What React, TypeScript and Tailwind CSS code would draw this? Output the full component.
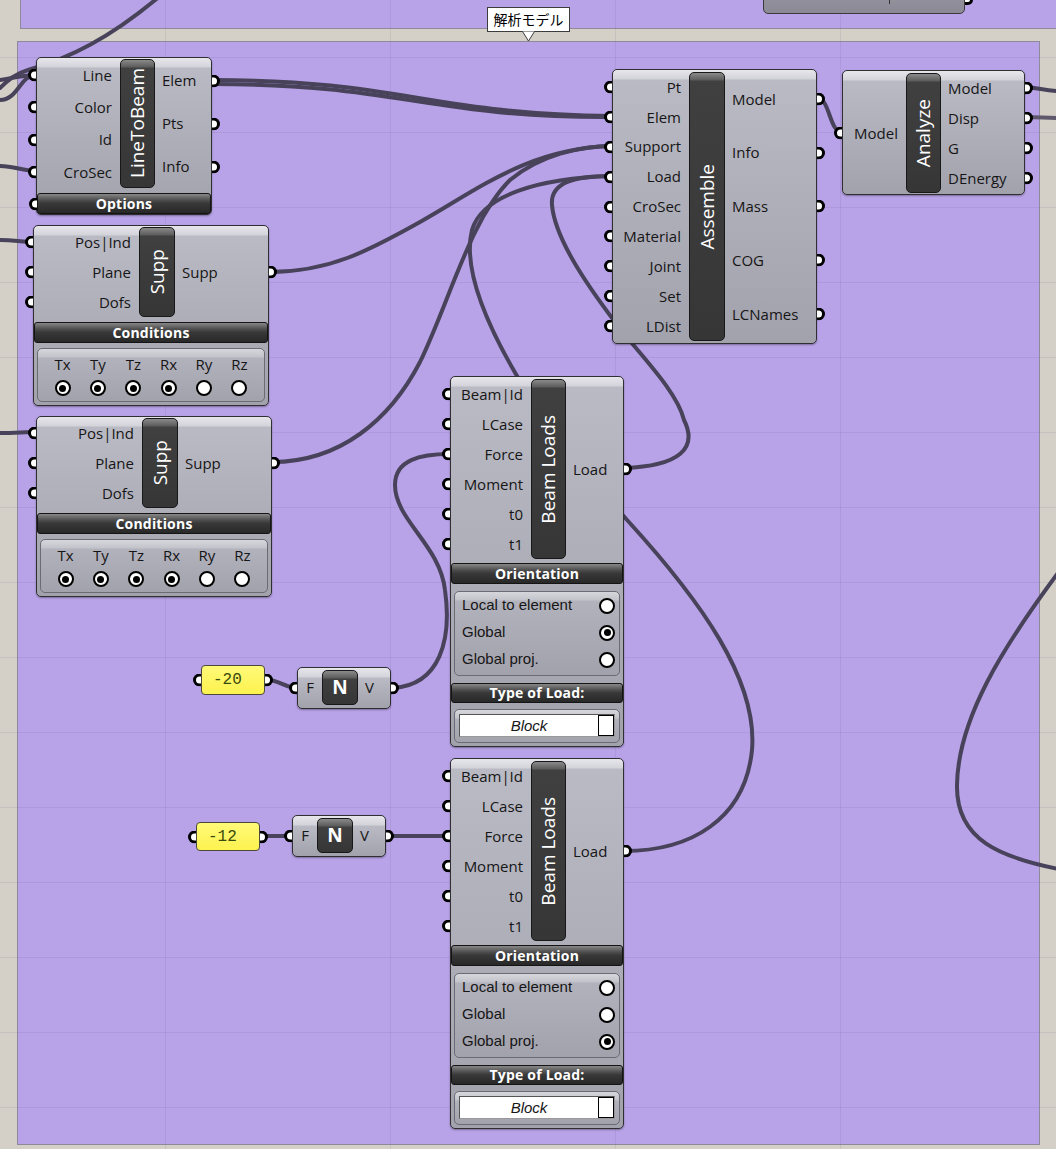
import React from "react";

const bodyCls =
  "absolute rounded-[5px] border border-[#2f2f33] bg-[linear-gradient(to_bottom,#e6e6eb_0px,#d3d3da_9px,#babac4_10px,#a2a2ad_100%)] shadow-[0_1px_2px_rgba(0,0,0,0.35)]";

const panelCls =
  "rounded-[5px] border border-[#6b6b74] bg-[linear-gradient(to_bottom,#d6d6dc_0px,#c3c3cb_8px,#b2b2bc_9px,#a2a2ac_100%)]";

function InPort() {
  return (
    <span className="absolute left-[-9px] top-1/2 h-[13px] w-[8px] -translate-y-1/2 rounded-l-full border-[3px] border-r-0 border-black bg-white" />
  );
}

function OutPort() {
  return (
    <span className="absolute right-[-9px] top-1/2 h-[13px] w-[8px] -translate-y-1/2 rounded-r-full border-[3px] border-l-0 border-black bg-white" />
  );
}

function Strip({ label, cls, upright }: { label: string; cls: string; upright?: boolean }) {
  return (
    <div
      className={
        "flex items-center justify-center rounded-[5px] border border-[#181818] bg-[linear-gradient(to_bottom,#8a8a8a_0px,#5c5c5c_7px,#404040_8px,#363636_100%)] " +
        cls
      }
    >
      {upright ? (
        <span className="text-[19px] font-bold leading-none text-white">{label}</span>
      ) : (
        <span className="rotate-180 text-[19px] leading-none text-white [writing-mode:vertical-rl]">
          {label}
        </span>
      )}
    </div>
  );
}

function Bar({ label, cls = "", port }: { label: string; cls?: string; port?: boolean }) {
  return (
    <div
      className={
        "relative rounded-[3px] border border-[#141414] bg-[linear-gradient(to_bottom,#888888_0px,#4e4e4e_6px,#383838_50%,#282828_100%)] text-center text-[14px] font-bold tracking-[0.2px] text-white " +
        cls
      }
    >
      {label}
      {port && <InPort />}
    </div>
  );
}

type CompProps = {
  pos: string;
  pad: string;
  inCol: string;
  strip: string;
  rowH: string;
  title: string;
  inputs: string[];
  outputs: string[];
  upright?: boolean;
  children?: React.ReactNode;
};

function Comp(p: CompProps) {
  return (
    <div className={bodyCls + " " + p.pos + " " + p.pad}>
      <div className={"flex " + p.rowH}>
        <div className={"flex flex-col " + p.inCol}>
          {p.inputs.map((l) => (
            <div key={l} className="relative flex flex-1 items-center justify-end pr-[8px]">
              {l}
              <InPort />
            </div>
          ))}
        </div>
        <Strip label={p.title} cls={p.strip} upright={p.upright} />
        <div className="flex flex-1 flex-col">
          {p.outputs.map((l) => (
            <div key={l} className="relative flex flex-1 items-center pl-[7px]">
              {l}
              <OutPort />
            </div>
          ))}
        </div>
      </div>
      {p.children}
    </div>
  );
}

function Dot({ on, size }: { on: boolean; size: string }) {
  return (
    <span className={"flex items-center justify-center rounded-full border-[2.5px] border-black bg-white " + size}>
      {on && <span className="h-[7px] w-[7px] rounded-full bg-black" />}
    </span>
  );
}

function Supp({ pos }: { pos: string }) {
  const dofs: [string, boolean][] = [
    ["Tx", true],
    ["Ty", true],
    ["Tz", true],
    ["Rx", true],
    ["Ry", false],
    ["Rz", false],
  ];
  return (
    <Comp
      pos={pos + " w-[236px]"}
      pad="pt-[1px] pb-[3px]"
      inCol="w-[105px]"
      strip="w-[36px]"
      rowH="h-[90px]"
      title="Supp"
      inputs={["Pos|Ind", "Plane", "Dofs"]}
      outputs={["Supp"]}
    >
      <Bar label="Conditions" cls="mt-[5px] h-[21px] leading-[19px]" />
      <div className={panelCls + " mx-[3px] mt-[5px] grid h-[54px] grid-cols-6 px-[7px]"}>
        {dofs.map(([l, on]) => (
          <div key={l} className="flex flex-col items-center">
            <span className="mt-[5px] text-[15px] leading-[20px]">{l}</span>
            <span className="mt-[6px]">
              <Dot on={on} size="h-[16px] w-[16px]" />
            </span>
          </div>
        ))}
      </div>
    </Comp>
  );
}

function BeamLoads({ pos, sel }: { pos: string; sel: number }) {
  const opts = ["Local to element", "Global", "Global proj."];
  return (
    <Comp
      pos={pos + " w-[174px]"}
      pad="pt-[2px] pb-[3px]"
      inCol="w-[80px]"
      strip="w-[35px]"
      rowH="h-[180px]"
      title="Beam Loads"
      inputs={["Beam|Id", "LCase", "Force", "Moment", "t0", "t1"]}
      outputs={["Load"]}
    >
      <Bar label="Orientation" cls="mt-[4px] h-[21px] leading-[19px]" />
      <div className={panelCls + " mx-[3px] mt-[7px] h-[85px]"}>
        {opts.map((o, i) => (
          <div
            key={o}
            className="flex h-[27px] items-center justify-between pl-[7px] pr-[4px] font-['Liberation_Sans',sans-serif] text-[15px]"
          >
            <span>{o}</span>
            <Dot on={i === sel} size="h-[16px] w-[16px]" />
          </div>
        ))}
      </div>
      <Bar label="Type of Load:" cls="mt-[7px] h-[20px] leading-[18px]" />
      <div className={panelCls + " mx-[3px] mt-[6px] h-[34px] px-[4px] pt-[4px]"}>
        <div className="flex h-[23px] border border-t-[#555] border-l-[#555] border-r-[#999] border-b-[#999] bg-white">
          <div className="flex-1 text-center font-['Liberation_Sans',sans-serif] text-[15px] italic leading-[21px]">
            Block
          </div>
          <div className="w-[16px] border border-black bg-white" />
        </div>
      </div>
    </Comp>
  );
}

function Slider({ pos, value }: { pos: string; value: string }) {
  return (
    <div
      className={
        "absolute w-[64px] rounded-[4px] border border-[#4a4a3a] bg-[linear-gradient(to_bottom,#fffa78,#fdf24f)] pl-[11px] font-['Liberation_Mono',monospace] text-[16px] text-[#3a4a0c] " +
        pos
      }
    >
      <span className="flex h-full items-center">{value}</span>
      <InPort />
      <OutPort />
    </div>
  );
}

const wires = [
  "M160,-4 C110,38 70,58 28,70 C15,74 8,80 0,88",
  "M0,100 C18,100 20,75 36,75",
  "M0,80 C15,78 22,75 36,75",
  "M0,166 C15,166 22,171 36,171",
  "M0,240 C15,240 20,242 33,242",
  "M0,433 C15,433 25,432 36,432",
  "M212,80 C400,80 430,114 612,116",
  "M212,84 C400,84 430,118 612,117",
  "M269,272 C330,272 370,250 420,222 C480,188 530,148 612,146",
  "M272,462 C340,462 390,420 420,362 C450,300 470,220 510,180 C540,155 580,146 612,146",
  "M624,468 C680,466 698,448 684,420 C678,395 650,365 625,335 C590,290 555,240 552,205 C550,182 575,176 612,176",
  "M624,851 C690,851 745,820 752,750 C758,680 700,600 628,521 C580,468 530,400 517,376 C490,330 462,270 472,230 C482,195 540,178 612,176",
  "M393,688 C440,685 452,640 445,590 C440,545 395,520 395,485 C395,460 420,454 450,454",
  "M267,680 C280,680 285,688 297,688",
  "M262,836 L292,836",
  "M388,836 L450,836",
  "M817,98 C830,98 829,132 842,132",
  "M1025,87 C1040,88 1045,91 1060,91",
  "M1064,565 C1000,650 958,720 957,785 C956,840 1000,858 1064,870",
];

export default function App() {
  return (
    <div className="relative h-[1149px] w-[1056px] overflow-hidden bg-[#d4d0c8] font-['Open_Sans',sans-serif] text-[15px] text-[#161616]">
      {/* groups */}
      <div className="absolute left-[20px] top-[-10px] h-[39px] w-[1060px] border border-[#8f8a9a] bg-[#b9a3e8]" />
      <div className="absolute left-[17px] top-[41px] h-[1104px] w-[1023px] border border-[#8f8a9a] bg-[#b9a3e8]" />

      {/* grid */}
      <div className="absolute inset-0 bg-[linear-gradient(to_right,rgba(60,50,90,0.09)_1px,transparent_1px),linear-gradient(to_bottom,rgba(60,50,90,0.09)_1px,transparent_1px)] bg-[size:225px_75px] bg-[position:165px_57px]" />

      {/* wires */}
      <svg className="absolute inset-0" width="1056" height="1149">
        {wires.map((d, i) => (
          <path key={i} d={d} fill="none" stroke="#48425a" strokeWidth="4" strokeLinecap="round" />
        ))}
        <path d="M1025,117 C1040,117 1045,118 1060,118" fill="none" stroke="#5f586c" strokeWidth="4" />
      </svg>

      {/* top group component (cut off) */}
      <div className="absolute left-[763px] top-[-20px] h-[34px] w-[202px] rounded-[5px] border border-[#3a3a3a] bg-[linear-gradient(to_bottom,#9a99a4,#8a8995)]">
        <span className="absolute bottom-[9px] left-[125px] h-[6px] w-px bg-[#333]" />
        <span className="absolute right-[-9px] top-[14px] h-[10px] w-[8px] rounded-r-full border-[3px] border-l-0 border-black bg-white" />
      </div>

      {/* callout */}
      <div className="absolute left-[487px] top-[7px] flex h-[25px] w-[83px] items-center justify-center border border-[#3c3c3c] bg-white font-['Noto_Sans_CJK_JP',sans-serif] text-[14px] text-black">
        解析モデル
      </div>
      <svg className="absolute left-[522px] top-[30px]" width="13" height="12">
        <path d="M0.5,1.5 L6.5,11 L12.5,1.5" fill="white" stroke="#3c3c3c" />
      </svg>

      <Comp
        pos="left-[36px] top-[57px] w-[176px]"
        pad="pt-[1px]"
        inCol="w-[83px]"
        strip="w-[35px]"
        rowH="h-[129px]"
        title="LineToBeam"
        inputs={["Line", "Color", "Id", "CroSec"]}
        outputs={["Elem", "Pts", "Info"]}
      >
        <Bar label="Options" cls="mt-[5px] h-[21px] leading-[19px]" port />
      </Comp>

      <Supp pos="left-[33px] top-[225px]" />
      <Supp pos="left-[36px] top-[416px]" />

      <Comp
        pos="left-[612px] top-[69px] w-[205px]"
        pad="pt-[2px] pb-[2px]"
        inCol="w-[76px]"
        strip="w-[36px]"
        rowH="h-[269px]"
        title="Assemble"
        inputs={["Pt", "Elem", "Support", "Load", "CroSec", "Material", "Joint", "Set", "LDist"]}
        outputs={["Model", "Info", "Mass", "COG", "LCNames"]}
      />

      <Comp
        pos="left-[842px] top-[70px] w-[183px]"
        pad="pt-[2px] pb-[1px]"
        inCol="w-[63px]"
        strip="w-[35px]"
        rowH="h-[120px]"
        title="Analyze"
        inputs={["Model"]}
        outputs={["Model", "Disp", "G", "DEnergy"]}
      />

      <BeamLoads pos="left-[450px] top-[376px]" sel={1} />
      <BeamLoads pos="left-[450px] top-[758px]" sel={2} />

      <Slider pos="left-[201px] top-[665px] h-[30px]" value="-20" />
      <Slider pos="left-[196px] top-[822px] h-[29px]" value="-12" />

      <Comp
        pos="left-[297px] top-[667px] w-[94px]"
        pad="pt-[2px] pb-[3px]"
        inCol="w-[24px]"
        strip="w-[36px]"
        rowH="h-[35px]"
        title="N"
        upright
        inputs={["F"]}
        outputs={["V"]}
      />
      <Comp
        pos="left-[292px] top-[815px] w-[94px]"
        pad="pt-[2px] pb-[3px]"
        inCol="w-[24px]"
        strip="w-[36px]"
        rowH="h-[35px]"
        title="N"
        upright
        inputs={["F"]}
        outputs={["V"]}
      />
    </div>
  );
}
